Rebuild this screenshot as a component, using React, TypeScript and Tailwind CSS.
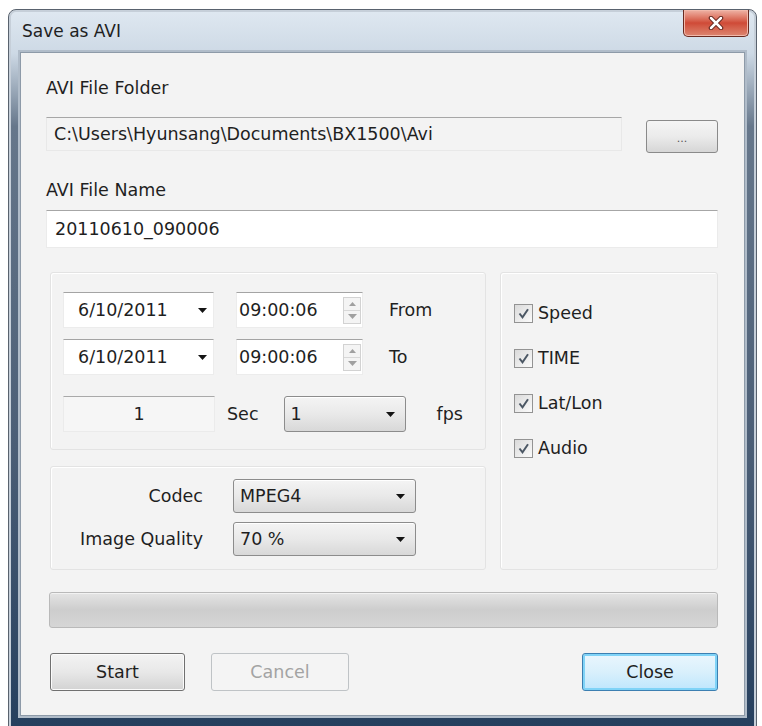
import React from "react";

function DownArrow({ color = "#141414" }: { color?: string }) {
  return (
    <svg width="9" height="5" viewBox="0 0 9 5">
      <path d="M0 0h9L4.5 5z" fill={color} />
    </svg>
  );
}

function Combo({ value, className = "" }: { value: string; className?: string }) {
  return (
    <div
      className={`flex items-center justify-between rounded-[3px] border border-[#8c8c8c] bg-linear-to-b from-[#f4f4f4] via-[#e9e9e9] to-[#d8d8d8] pl-[6px] pr-[10px] shadow-[inset_0_1px_0_#ffffff] ${className}`}
    >
      <span>{value}</span>
      <DownArrow />
    </div>
  );
}

function Spinner() {
  return (
    <div className="flex h-[27px] w-[18px] flex-col border border-[#d2d2d2] bg-[#f4f4f4]">
      <div className="flex flex-1 items-center justify-center border-b border-[#d8d8d8]">
        <svg width="7" height="4" viewBox="0 0 7 4">
          <path d="M0 4h7L3.5 0z" fill="#a0a0a0" />
        </svg>
      </div>
      <div className="flex flex-1 items-center justify-center">
        <DownArrow color="#a0a0a0" />
      </div>
    </div>
  );
}

function DateRow({ label }: { label: string }) {
  return (
    <div className="flex items-center">
      <div className="flex h-[36px] w-[151px] items-center justify-between border border-[#ececec] border-t-[#a4a4a4] bg-white pl-[14px] pr-[6px]">
        <span>6/10/2011</span>
        <DownArrow />
      </div>
      <div className="ml-[22px] flex h-[36px] w-[127px] items-center justify-between border border-[#ececec] border-t-[#a4a4a4] bg-white pl-[2px] pr-[1px]">
        <span>09:00:06</span>
        <Spinner />
      </div>
      <span className="ml-[26px]">{label}</span>
    </div>
  );
}

function Check({ label }: { label: string }) {
  return (
    <div className="flex h-[20px] items-center gap-[5px]">
      <div className="flex h-[19px] w-[19px] items-center justify-center border border-[#939393] bg-linear-to-br from-[#dadada] to-[#fbfbfb]">
        <svg width="13" height="13" viewBox="0 0 13 13">
          <path d="M2.5 6.5l3 3.8 5.5-8" fill="none" stroke="#4b5764" strokeWidth="2" />
        </svg>
      </div>
      <span>{label}</span>
    </div>
  );
}

export default function App() {
  return (
    <div className="h-[726px] w-[762px] overflow-hidden bg-white pl-[8px] pt-[9px] font-['DejaVu_Sans',sans-serif] text-[17.5px] leading-[20px] text-[#1f1f1f]">
      <div className="flex h-[730px] w-[749px] flex-col rounded-t-[8px] border border-[#59626e] bg-[linear-gradient(to_bottom,#dfe8f1_0%,#cdd9e5_6%,#66778b_16%,#4b5e76_60%,#243e5d_100%)] shadow-[inset_0_0_0_2px_#c6cfd9]">
        {/* title bar */}
        <div className="flex h-[42px] shrink-0 items-start justify-between pl-[13px] pr-[7px]">
          <span className="self-center text-[17px]">Save as AVI</span>
          <div className="flex h-[27px] w-[66px] items-center justify-center rounded-b-[5px] border border-t-0 border-[#6a2a20] bg-linear-to-b from-[#eeb3a6] via-[#cf4a37] to-[#dc8570] shadow-[inset_0_0_0_1px_#f2b9ab]">
            <svg width="16" height="14" viewBox="0 0 16 14">
              <path d="M3 2l10 10M13 2L3 12" stroke="#5b2019" strokeWidth="4.5" strokeLinecap="round" />
              <path d="M3 2l10 10M13 2L3 12" stroke="#ffffff" strokeWidth="2.5" strokeLinecap="round" />
            </svg>
          </div>
        </div>

        {/* client */}
        <div className="mx-[11px] flex h-[664px] flex-col border border-[#8d9aa8] bg-[#f3f3f3] pl-[25px] pr-[26px] shadow-[0_0_0_2px_#b0bcc9]">
          <div className="mt-[25px]">AVI File Folder</div>
          <div className="mt-[19px] flex items-start">
            <div className="flex h-[34px] flex-1 items-center border border-[#e8e8e8] border-t-[#a6a6a6] pl-[7px]">
              {"C:\\Users\\Hyunsang\\Documents\\BX1500\\Avi"}
            </div>
            <div className="ml-[24px] mt-[3px] flex h-[33px] w-[72px] items-end justify-center rounded-[3px] border border-[#8a8a8a] bg-linear-to-b from-[#f5f5f5] via-[#ebebeb] to-[#d6d6d6] pb-[8px] text-[11px] leading-[11px] text-[#555]">
              ...
            </div>
          </div>

          <div className="mt-[27px]">AVI File Name</div>
          <div className="mt-[10px] flex h-[38px] items-center border border-[#ebebeb] border-t-[#a6a6a6] bg-white pl-[8px]">
            20110610_090006
          </div>

          <div className="ml-[4px] mt-[24px] flex h-[298px] gap-[14px]">
            <div className="flex w-[436px] flex-col gap-[16px]">
              <div className="flex h-[178px] flex-col rounded-[3px] border border-[#e3e3e3] pl-[12px] pt-[19px] shadow-[inset_1px_1px_0_#ffffff]">
                <DateRow label="From" />
                <div className="mt-[11px]">
                  <DateRow label="To" />
                </div>
                <div className="mt-[21px] flex items-center">
                  <div className="flex h-[36px] w-[152px] items-center justify-center border border-[#ebebeb] border-t-[#a9a9a9] bg-[#f6f6f6]">
                    1
                  </div>
                  <span className="ml-[12px]">Sec</span>
                  <Combo value="1" className="ml-[25px] h-[36px] w-[122px]" />
                  <span className="ml-[31px]">fps</span>
                </div>
              </div>
              <div className="flex flex-1 flex-col gap-[9px] rounded-[3px] border border-[#e3e3e3] pt-[12px] shadow-[inset_1px_1px_0_#ffffff]">
                <div className="flex items-center">
                  <span className="w-[152px] text-right">Codec</span>
                  <Combo value="MPEG4" className="ml-[30px] h-[34px] w-[183px]" />
                </div>
                <div className="flex items-center">
                  <span className="w-[152px] text-right">Image Quality</span>
                  <Combo value="70 %" className="ml-[30px] h-[34px] w-[183px]" />
                </div>
              </div>
            </div>
            <div className="flex w-[218px] flex-col gap-[25px] rounded-[3px] border border-[#e3e3e3] pl-[13px] pt-[30px] shadow-[inset_1px_1px_0_#ffffff]">
              <Check label="Speed" />
              <Check label="TIME" />
              <Check label="Lat/Lon" />
              <Check label="Audio" />
            </div>
          </div>

          <div className="ml-[3px] mt-[22px] h-[36px] rounded-[3px] border border-[#b9b9b9] bg-linear-to-b from-[#e4e4e4] via-[#cdcdcd] to-[#d6d6d6] shadow-[inset_0_1px_0_#f2f2f2]" />

          <div className="mt-[25px] flex h-[38px]">
            <div className="ml-[4px] flex w-[135px] items-center justify-center rounded-[3px] border border-[#707070] bg-linear-to-b from-[#f3f3f3] via-[#e8e8e8] to-[#d3d3d3] shadow-[inset_0_0_0_1px_#fbfbfb]">
              Start
            </div>
            <div className="ml-[26px] flex w-[138px] items-center justify-center rounded-[3px] border border-[#bfc3c6] bg-[#f4f4f4] text-[#a3a3a3]">
              Cancel
            </div>
            <div className="ml-auto flex w-[136px] items-center justify-center rounded-[3px] border border-[#3c7fb1] bg-linear-to-b from-[#eaf6fd] via-[#d9f0fc] to-[#bee6fd] shadow-[inset_0_0_0_2px_#7fd3f7]">
              Close
            </div>
          </div>
        </div>
      </div>
    </div>
  );
}
